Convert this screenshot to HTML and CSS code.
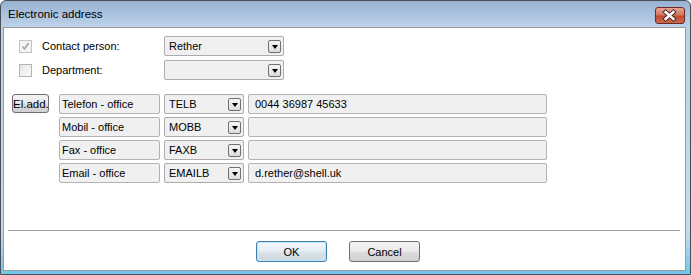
FILE: index.html
```html
<!DOCTYPE html>
<html lang="en">
<head>
    <meta charset="UTF-8">
    <title>Electronic address</title>
    <link rel="stylesheet" href="styles.css">
</head>
<body>
    <div class="window">
        <!-- Title bar -->
        <div class="titlebar">
            <span class="title">Electronic address</span>
            <span class="close-btn">
                <svg width="30" height="17" viewBox="0 0 30 17">
                    <path d="M11 5 L19 12 M19 5 L11 12" stroke="#4a2a26" stroke-width="4.6" stroke-linecap="square" fill="none"/>
                    <path d="M11 5 L19 12 M19 5 L11 12" stroke="#ffffff" stroke-width="2.6" stroke-linecap="square" fill="none"/>
                </svg>
            </span>
        </div>

        <div class="client">
            <!-- Owner selection -->
            <div class="owner-rows">
                <div class="owner-row">
                    <span class="check check-disabled">
                        <svg width="11" height="11" viewBox="0 0 11 11">
                            <path d="M2.5 5.5 L4.5 8 L8.5 2" stroke="#a6a6a6" stroke-width="1.6" fill="none"/>
                        </svg>
                    </span>
                    <span class="owner-label">Contact person:</span>
                    <div class="combo combo-wide">
                        <span class="combo-text">Rether</span>
                        <span class="combo-btn"></span>
                    </div>
                </div>
                <div class="owner-row">
                    <span class="check"></span>
                    <span class="owner-label">Department:</span>
                    <div class="combo combo-wide">
                        <span class="combo-text"></span>
                        <span class="combo-btn"></span>
                    </div>
                </div>
            </div>

            <!-- Address list -->
            <div class="address-block">
                <button class="win-btn eladd-btn">El.add.</button>
                <div class="address-rows">
                    <div class="address-row">
                        <div class="field field-label">Telefon - office</div>
                        <div class="combo combo-code">
                            <span class="combo-text">TELB</span>
                            <span class="combo-btn"></span>
                        </div>
                        <div class="field field-value">0044 36987 45633</div>
                    </div>
                    <div class="address-row">
                        <div class="field field-label">Mobil - office</div>
                        <div class="combo combo-code">
                            <span class="combo-text">MOBB</span>
                            <span class="combo-btn"></span>
                        </div>
                        <div class="field field-value"></div>
                    </div>
                    <div class="address-row">
                        <div class="field field-label">Fax - office</div>
                        <div class="combo combo-code">
                            <span class="combo-text">FAXB</span>
                            <span class="combo-btn"></span>
                        </div>
                        <div class="field field-value"></div>
                    </div>
                    <div class="address-row">
                        <div class="field field-label">Email - office</div>
                        <div class="combo combo-code">
                            <span class="combo-text">EMAILB</span>
                            <span class="combo-btn"></span>
                        </div>
                        <div class="field field-value">d.rether@shell.uk</div>
                    </div>
                </div>
            </div>

            <!-- Buttons -->
            <div class="dialog-footer">
                <button class="win-btn dialog-btn btn-default">OK</button>
                <button class="win-btn dialog-btn">Cancel</button>
            </div>
        </div>
    </div>
</body>
</html>
```

FILE: styles.css
```css
* {
    box-sizing: border-box;
    margin: 0;
    padding: 0;
}

body {
    font-family: 'Liberation Sans', Arial, sans-serif;
    font-size: 11px;
    color: #000;
    background-color: #fff;
}

.window {
    width: 691px;
    height: 275px;
    border: 1px solid #4a4f56;
    border-radius: 6px 6px 0 0;
    background: linear-gradient(to bottom, #98b2d2 0, #bdd2ea 26px, #c6d9ee 85%, #6fc6ec 100%);
    padding: 0 4px 3px 2px;
    display: flex;
    flex-direction: column;
}

.titlebar {
    height: 26px;
    display: flex;
    align-items: center;
    padding-left: 5px;
}

.title {
    font-size: 11.5px;
    color: #000;
}

.close-btn {
    margin-left: auto;
    margin-right: 1px;
    width: 30px;
    height: 17px;
    border: 1px solid #6b2b22;
    border-radius: 3px;
    background: linear-gradient(to bottom, #e7a392 0, #d27862 45%, #c04a2e 55%, #cc6a50 100%);
    display: flex;
    margin-top: 2px;
}

.close-btn svg {
    margin: -1px 0 0 -1px;
}

.client {
    flex: 1;
    background-color: #fff;
    border: 1px solid #9a9a9a;
    display: flex;
    flex-direction: column;
}

.owner-rows {
    display: flex;
    flex-direction: column;
    gap: 4px;
    padding-top: 8px;
}

.owner-row {
    display: flex;
    align-items: center;
    height: 20px;
}

.check {
    width: 13px;
    height: 13px;
    margin-left: 15px;
    border: 1px solid #b4b4b4;
    background: linear-gradient(135deg, #e6e6e6, #fbfbfb);
    display: flex;
    align-items: center;
    justify-content: center;
}

.check-disabled {
    background: #f4f4f4;
    border-color: #c4c4c4;
}

.owner-label {
    width: 122px;
    margin-left: 10px;
}

.combo {
    height: 20px;
    display: flex;
    align-items: center;
    background-color: #f0f0f0;
    border: 1px solid #acacac;
    border-radius: 2px;
    padding: 0 2px 0 4px;
}

.combo-wide {
    width: 120px;
    height: 20px;
}

.combo-code {
    width: 80px;
}

.combo-text {
    flex: 1;
    white-space: nowrap;
}

.combo-btn {
    width: 13px;
    height: 13px;
    border: 1px solid #707070;
    border-radius: 2px;
    background: linear-gradient(to bottom, #f6f6f6, #dcdcdc);
    display: flex;
    align-items: center;
    justify-content: center;
}

.combo-btn::after {
    content: '';
    border-left: 3px solid transparent;
    border-right: 3px solid transparent;
    border-top: 4px solid #000;
    margin-top: 1px;
}

.address-block {
    display: flex;
    align-items: flex-start;
    gap: 10px;
    margin-top: 14px;
    padding-left: 8px;
}

.win-btn {
    font-family: inherit;
    font-size: 11px;
    color: #000;
    border: 1px solid #707070;
    border-radius: 3px;
    background: linear-gradient(to bottom, #f3f3f3 0, #ebebeb 48%, #dddddd 52%, #cfcfcf 100%);
}

.eladd-btn {
    width: 37px;
    height: 19px;
    font-size: 11.5px;
}

.address-rows {
    display: flex;
    flex-direction: column;
    gap: 3px;
}

.address-row {
    display: flex;
    gap: 4px;
    height: 20px;
}

.field {
    height: 20px;
    display: flex;
    align-items: center;
    background-color: #f0f0f0;
    border: 1px solid #b2b2b2;
    border-radius: 2px;
    white-space: nowrap;
}

.field-label {
    width: 101px;
    padding-left: 2px;
}

.field-value {
    width: 299px;
    padding-left: 6px;
}

.dialog-footer {
    margin-top: auto;
    margin-left: 4px;
    margin-right: 5px;
    border-top: 1px solid #a0a0a0;
    padding: 10px 0 8px 248px;
    display: flex;
    gap: 22px;
}

.dialog-btn {
    width: 71px;
    height: 21px;
}

.btn-default {
    border-color: #3c7fb1;
    box-shadow: inset 0 0 0 1px #c4e5f6;
    background: linear-gradient(to bottom, #f2f8fc 0, #e6eef4 48%, #d8e3eb 52%, #cdd9e2 100%);
}
```
